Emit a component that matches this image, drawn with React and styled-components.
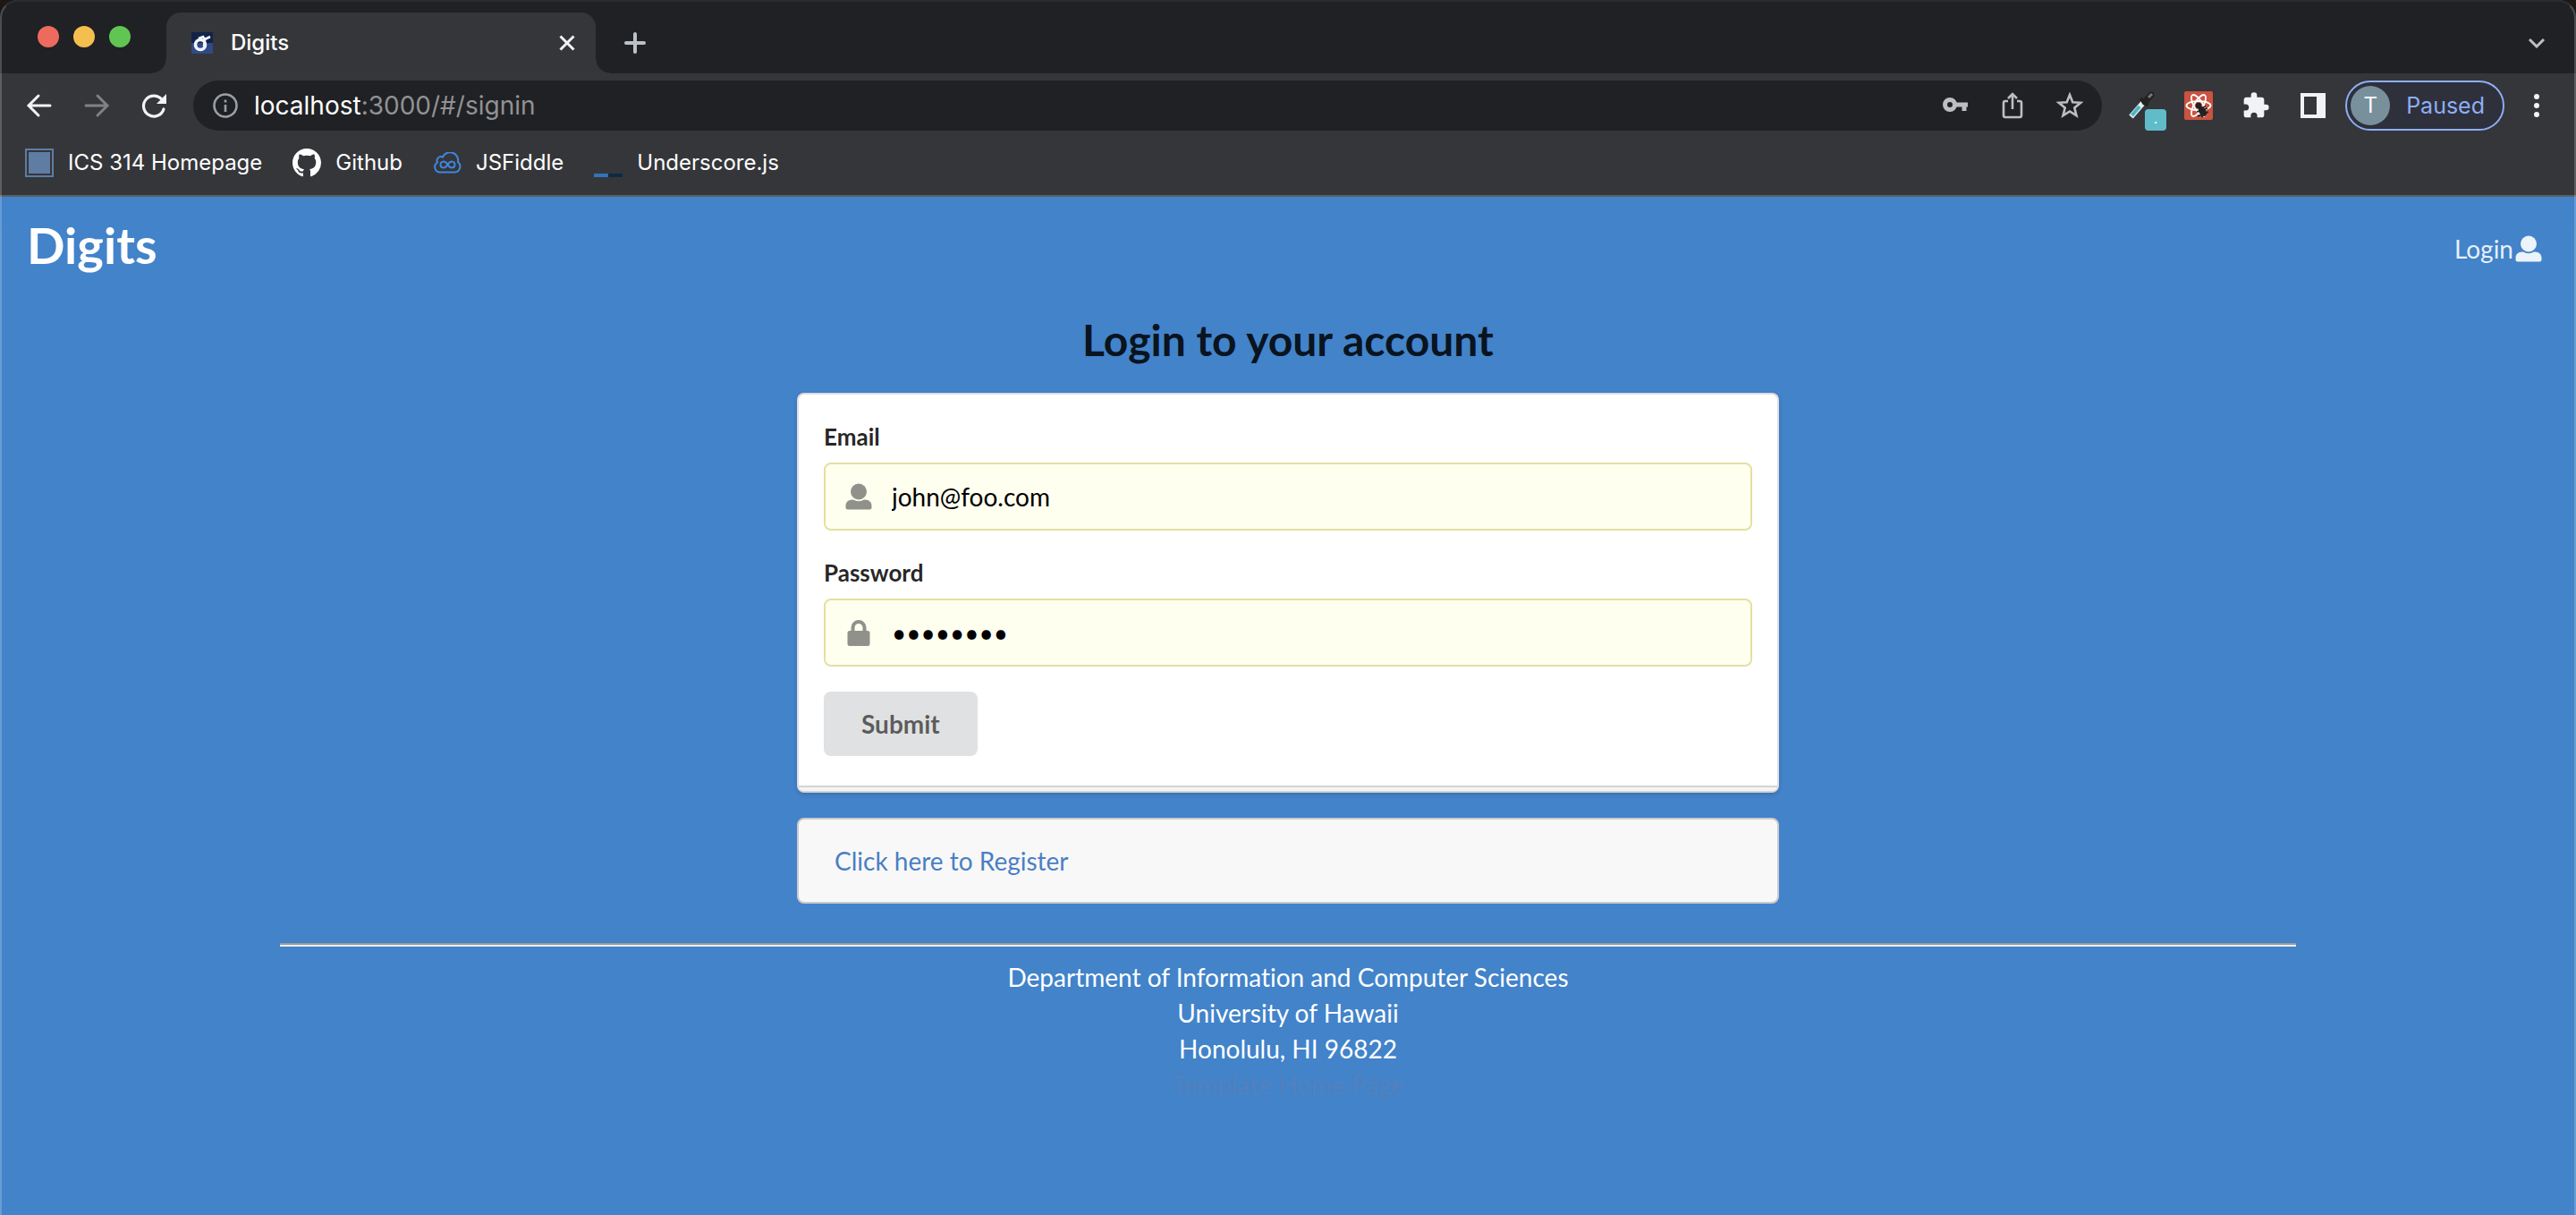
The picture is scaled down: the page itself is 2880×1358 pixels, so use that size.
import React from "react";
import styled, { createGlobalStyle } from "styled-components";

const chromeFont = `Inter, Roboto, "Liberation Sans", sans-serif`;
const pageFont = `Lato, "Liberation Sans", sans-serif`;

const Global = createGlobalStyle`
  *, *::before, *::after { box-sizing: border-box; }
  html { background: #1d1815; }
  body {
    margin: 0;
    font-family: ${pageFont};
    font-size: 28px;
    line-height: 40px;
    font-variant-ligatures: none;
  }
  a { text-decoration: none; }
  svg { display: block; }
`;

const Window = styled.div`
  position: relative;
  min-height: 100vh;
  display: flex;
  flex-direction: column;
  background: #4283ca;
  border-radius: 20px 20px 0 0;
  overflow: hidden;
  &::after {
    content: "";
    position: absolute;
    inset: 0;
    border: 2px solid rgba(255, 255, 255, 0.2);
    border-top-color: rgba(255, 255, 255, 0.05);
    border-bottom: 0;
    border-radius: 20px 20px 0 0;
    pointer-events: none;
  }
`;

const Chrome = styled.header`
  background: #35363a;
  border-bottom: 2px solid #5f6063;
  font-family: ${chromeFont};
  color: #fff;
`;

const TabStrip = styled.div`
  display: flex;
  align-items: flex-end;
  height: 82px;
  background: #202124;
  padding: 0 32px 0 42px;
`;

const Lights = styled.div`
  display: flex;
  gap: 16px;
  width: 144px;
  align-self: center;
`;

const Light = styled.span`
  width: 24px;
  height: 24px;
  border-radius: 50%;
  background: ${(p) => p.$color};
`;

const Tab = styled.div`
  position: relative;
  display: flex;
  align-items: center;
  width: 480px;
  height: 68px;
  padding: 0 20px 0 28px;
  gap: 20px;
  border-radius: 16px 16px 0 0;
  background: #35363a;
  font-size: 24px;
  font-weight: 500;
  &::before, &::after {
    content: "";
    position: absolute;
    bottom: 0;
    width: 16px;
    height: 16px;
  }
  &::before { left: -16px; background: radial-gradient(circle at 0 0, #202124 15px, #35363a 16px); }
  &::after { right: -16px; background: radial-gradient(circle at 100% 0, #202124 15px, #35363a 16px); }
`;

const TabTitle = styled.span`
  flex: 1;
`;

const IconButton = styled.button`
  display: flex;
  align-items: center;
  justify-content: center;
  flex: none;
  width: ${(p) => p.$w || 24}px;
  height: ${(p) => p.$h || 56}px;
  padding: 0;
  border: 0;
  background: none;
  color: ${(p) => p.$color || "#f1f3f4"};
`;

const NewTab = styled(IconButton)`
  margin-left: 32px;
`;

const MenuButton = styled(IconButton)`
  margin-left: 28px;
`;

const Spacer = styled.div`
  flex: 1;
`;

const Toolbar = styled.div`
  display: flex;
  align-items: center;
  height: 72px;
  padding: 0 36px 0 26px;
`;

const NavButtons = styled.div`
  display: flex;
  gap: 28px;
  margin-right: 26px;
`;

const Omnibox = styled.div`
  flex: 1;
  display: flex;
  align-items: center;
  height: 56px;
  padding: 0 20px;
  border-radius: 28px;
  background: #202124;
`;

const Address = styled.div`
  flex: 1;
  margin-left: 16px;
  font-size: 28px;
  color: #919294;
`;

const Host = styled.span`
  color: #fff;
`;

const OmniActions = styled.div`
  display: flex;
  gap: 32px;
`;

const Extensions = styled.div`
  display: flex;
  align-items: center;
  gap: 32px;
  margin: 0 20px 0 28px;
`;

const ExtensionSlot = styled.span`
  position: relative;
  display: flex;
`;

const Badge = styled.span`
  position: absolute;
  right: -12px;
  bottom: -12px;
  width: 24px;
  height: 24px;
  border-radius: 4px;
  background: #60bcc8;
  font-size: 16px;
  line-height: 20px;
  text-align: center;
`;

const Profile = styled.button`
  display: flex;
  align-items: center;
  gap: 18px;
  height: 56px;
  padding: 0 20px 0 4px;
  border: 2px solid #8eaef4;
  border-radius: 28px;
  background: #2e303b;
  color: #8eaef4;
  font: 400 25px ${chromeFont};
`;

const Avatar = styled.span`
  width: 44px;
  height: 44px;
  border-radius: 50%;
  background: #78909c;
  color: #fff;
  font-size: 24px;
  font-weight: 400;
  line-height: 44px;
`;

const Bookmarks = styled.nav`
  display: flex;
  align-items: center;
  gap: 34px;
  height: 64px;
  padding: 0 28px 8px;
`;

const Bookmark = styled.a`
  display: flex;
  align-items: center;
  gap: 16px;
  color: #fff;
  font-size: 24px;
  line-height: 32px;
`;

const Square = styled.span`
  width: 32px;
  height: 32px;
  padding: 2px;
  border: 2px solid #5f7ca3;
  &::before { content: ""; display: block; height: 100%; background: #5f7ca3; }
`;

const NavBar = styled.nav`
  display: flex;
  align-items: center;
  justify-content: space-between;
  height: 108px;
  padding: 0 38px 0 30px;
`;

const Brand = styled.a`
  color: #fff;
  font-size: 56px;
  font-weight: 700;
  line-height: 72px;
`;

const LoginLink = styled.a`
  display: flex;
  align-items: center;
  gap: 2px;
  padding-top: 8px;
  color: rgba(255, 255, 255, 0.9);
`;

const Main = styled.main`
  width: 1098px;
  max-width: 100%;
  margin: 0 auto;
`;

const Title = styled.h2`
  margin: 22px 0 29px;
  text-align: center;
  font-size: 48px;
  line-height: 60px;
  color: rgba(0, 0, 0, 0.87);
`;

const Form = styled.form`
  border: 2px solid #dcdddf;
  border-bottom-color: #d4d4d5;
  border-radius: 8px;
  background: #fff;
  box-shadow: 0 2px 4px rgba(34, 36, 38, 0.2);
  overflow: hidden;
`;

const Fields = styled.div`
  display: flex;
  flex-direction: column;
  align-items: flex-start;
  gap: 28px;
  padding: 28px 28px 33px;
`;

const FormFoot = styled.div`
  height: 6px;
  border-top: 2px solid #d4d4d5;
  background: #f3f4f5;
`;

const Field = styled.div`
  display: flex;
  flex-direction: column;
  gap: 10px;
  width: 100%;
`;

const Label = styled.label`
  font-size: 26px;
  font-weight: 700;
  line-height: 38px;
  color: rgba(0, 0, 0, 0.87);
`;

const InputWrap = styled.div`
  display: flex;
  align-items: center;
  height: 76px;
  padding-left: 22px;
  gap: 16px;
  border: 2px solid #e5dfa1;
  border-radius: 8px;
  background: #fffff0;
  color: #90918a;
`;

const Input = styled.input`
  flex: 1;
  min-width: 0;
  height: 100%;
  padding: 0 28px 0 6px;
  border: 0;
  outline: 0;
  background: none;
  color: #000;
  font-family: ${pageFont};
  font-size: 28px;
`;

const Submit = styled.button`
  height: 72px;
  padding: 0 42px;
  border: 0;
  border-radius: 8px;
  background: #e0e1e2;
  color: rgba(0, 0, 0, 0.6);
  font: 700 28px ${pageFont};
`;

const Message = styled.div`
  margin: 28px 0 44px;
  padding: 26px 40px;
  border: 2px solid #c9cacb;
  border-radius: 8px;
  background: #f8f8f9;
`;

const Register = styled.a`
  color: #4a7fc3;
`;

const Footer = styled.footer`
  width: 2254px;
  max-width: 100%;
  margin: 0 auto;
  border-top: 2px solid #9a9a9a;
  text-align: center;
  color: #fff;
  &::before {
    content: "";
    display: block;
    height: 2px;
    margin-bottom: 14px;
    background: #eeeeee;
  }
`;

const FooterLink = styled.a`
  color: #5381bd;
`;

const Svg = ({ w = 28, h = w, box = "0 0 24 24", children, ...rest }) => (
  <svg width={w} height={h} viewBox={box} fill="none" stroke="currentColor" aria-hidden="true" {...rest}>
    {children}
  </svg>
);

const UserIcon = () => (
  <Svg w={30} box="0 0 30 30" stroke="none" fill="currentColor">
    <circle cx="15" cy="9.500" r="9" />
    <path d="M8 18.500h1a12 12 0 0 0 12 0h1c5 0 7.500 3 7.500 7v1.500a2.500 2.500 0 0 1-2.500 2.500h-24A2.500 2.500 0 0 1 .5 27v-1.500c0-4 2.500-7 7.500-7z" />
  </Svg>
);

const LockIcon = () => (
  <Svg w={30} box="0 0 30 30" stroke="none" fill="currentColor">
    <path fillRule="evenodd" d="M6.500 13V9.500a8.500 8.500 0 0 1 17 0V13h1.500a2.500 2.500 0 0 1 2.500 2.500V27.500a2.500 2.500 0 0 1-2.500 2.500h-20A2.500 2.500 0 0 1 2.500 27.500v-12A2.500 2.500 0 0 1 5 13zM10.500 13h9V9.500a4.500 4.500 0 0 0-9 0z" />
  </Svg>
);

const GithubIcon = () => (
  <Svg w={32} box="0 0 16 16" stroke="none" fill="#fff">
    <path d="M8 0C3.580 0 0 3.580 0 8c0 3.540 2.290 6.530 5.470 7.590.4.070.55-.17.55-.38 0-.19-.01-.82-.01-1.490-2.010.37-2.530-.49-2.690-.94-.09-.23-.48-.94-.82-1.130-.28-.15-.68-.52-.01-.53.63-.01 1.080.58 1.230.82.72 1.210 1.870.87 2.330.66.07-.52.28-.87.51-1.070-1.780-.2-3.640-.89-3.640-3.950 0-.87.31-1.590.82-2.150-.08-.2-.36-1.020.08-2.120 0 0 .67-.21 2.200.82a7.600 7.600 0 0 1 4 0c1.530-1.040 2.200-.82 2.200-.82.44 1.100.16 1.920.08 2.120.51.56.82 1.270.82 2.150 0 3.070-1.870 3.750-3.650 3.950.29.25.54.73.54 1.480 0 1.070-.01 1.930-.01 2.200 0 .21.15.46.55.38A8 8 0 0 0 16 8c0-4.420-3.580-8-8-8z" />
  </Svg>
);

export default function App() {
  return (
    <Window>
      <Global />
      <Chrome>
        <TabStrip>
          <Lights>
            <Light $color="#ed6a5e" />
            <Light $color="#f5bf4f" />
            <Light $color="#61c554" />
          </Lights>
          <Tab>
            <Svg w={24} stroke="none">
              <rect width="24" height="24" fill="#13224b" />
              <rect y="12" width="24" height="12" fill="#2f4a85" />
              <circle cx="10" cy="14" r="5.500" stroke="#f2f4f8" strokeWidth="3.600" />
              <path d="M8 7l5-2 2 3 6-3M15 8l-1 8" stroke="#f2f4f8" strokeWidth="2.600" />
            </Svg>
            <TabTitle>Digits</TabTitle>
            <IconButton $w={24} aria-label="Close tab">
              <Svg w={24} strokeWidth="3"><path d="M4.500 4.500l15 15M19.500 4.500l-15 15" /></Svg>
            </IconButton>
          </Tab>
          <NewTab $w={24} $h={68} $color="#bdc1c6" aria-label="New tab">
            <Svg w={24} strokeWidth="4" strokeLinecap="round"><path d="M12 2v20M2 12h20" /></Svg>
          </NewTab>
          <Spacer />
          <IconButton $w={24} $h={68} $color="#bdc1c6" aria-label="Search tabs">
            <Svg w={24} strokeWidth="3"><path d="M4 8l8 8 8-8" /></Svg>
          </IconButton>
        </TabStrip>
        <Toolbar>
          <NavButtons>
            <IconButton $w={36} aria-label="Back">
              <Svg w={32} box="0 0 32 32" strokeWidth="3" strokeLinecap="round"><path d="M28 16H5M15 5L4 16l11 11" /></Svg>
            </IconButton>
            <IconButton $w={36} $color="#808184" aria-label="Forward">
              <Svg w={32} box="0 0 32 32" strokeWidth="3" strokeLinecap="round"><path d="M4 16h23M17 5l11 11-11 11" /></Svg>
            </IconButton>
            <IconButton $w={36} aria-label="Reload">
              <Svg w={32} box="0 0 32 32" strokeWidth="3.200">
                <path d="M27 20a11.500 11.500 0 1 1-1.500-10" strokeLinecap="round" />
                <path d="M30 3v11H19z" fill="currentColor" stroke="none" />
              </Svg>
            </IconButton>
          </NavButtons>
          <Omnibox>
            <IconButton $w={32} $color="#9aa0a6" aria-label="Site information">
              <Svg w={28} box="0 0 28 28" strokeWidth="2.600"><circle cx="14" cy="14" r="12.500" /><path d="M14 13v8M14 7.500v3" /></Svg>
            </IconButton>
            <Address><Host>localhost</Host>:3000/#/signin</Address>
            <OmniActions>
              <IconButton $w={32} $color="#bdbec0" aria-label="Passwords">
                <Svg w={28} box="0 0 28 28">
                  <circle cx="8" cy="13" r="5.500" strokeWidth="5" />
                  <path d="M14 13h14M24 13v7" strokeWidth="5" />
                </Svg>
              </IconButton>
              <IconButton $w={32} $color="#bdbec0" aria-label="Share">
                <Svg w={30} box="0 0 30 30" strokeWidth="2.600">
                  <path d="M10 10H7a2 2 0 0 0-2 2v14a2 2 0 0 0 2 2h16a2 2 0 0 0 2-2V12a2 2 0 0 0-2-2h-3M15 19V3M10 7l5-5 5 5" />
                </Svg>
              </IconButton>
              <IconButton $w={32} $color="#bdbec0" aria-label="Bookmark this page">
                <Svg w={32} box="0 0 32 32" strokeWidth="2.600">
                  <path d="M16 4l3.300 8.200 8.900.6-6.900 5.700 2.200 8.600L16 22.500l-7.500 4.600 2.200-8.600-6.900-5.700 8.900-.6z" />
                </Svg>
              </IconButton>
            </OmniActions>
          </Omnibox>
          <Extensions>
            <ExtensionSlot>
              <IconButton $w={32} $h={32} aria-label="Color picker">
                <Svg w={32} box="0 0 32 32">
                  <path d="M4.500 28.500L18 13" stroke="#dfeeee" strokeWidth="6" />
                  <path d="M5.500 27L14 17" stroke="#4db6c2" strokeWidth="4" />
                  <path d="M15 8l8 8" stroke="#222" strokeWidth="4" />
                  <path d="M20 12l7-8" stroke="#222" strokeWidth="7" strokeLinecap="round" />
                  <path d="M24 7l4-4" stroke="#777" strokeWidth="3" />
                </Svg>
              </IconButton>
              <Badge>.</Badge>
            </ExtensionSlot>
            <IconButton $w={32} aria-label="React developer tools">
              <Svg w={32} box="0 0 32 32">
                <rect width="32" height="32" rx="2" fill="#cb5340" stroke="none" />
                <g stroke="#fff" strokeWidth="1.800">
                  <ellipse cx="16" cy="16" rx="13.500" ry="5" />
                  <ellipse cx="16" cy="16" rx="13.500" ry="5" transform="rotate(60 16 16)" />
                  <ellipse cx="16" cy="16" rx="13.500" ry="5" transform="rotate(120 16 16)" />
                </g>
                <circle cx="16" cy="16" r="3.200" fill="#222" stroke="none" />
                <ellipse cx="20.500" cy="22.500" rx="4" ry="6" transform="rotate(-35 20.500 22.500)" fill="#222" stroke="none" />
                <path d="M14 23l12-4M15 28l12-5M21 29l-2-2M18 19l6-2" stroke="#222" strokeWidth="1.800" />
              </Svg>
            </IconButton>
            <IconButton $w={32} aria-label="Extensions">
              <Svg w={32} stroke="none" fill="currentColor">
                <path d="M20.500 11H19V7c0-1.100-.9-2-2-2h-4V3.500a2.500 2.500 0 0 0-5 0V5H4c-1.100 0-2 .9-2 2v3.800h1.500a2.700 2.700 0 0 1 0 5.400H2V20c0 1.100.9 2 2 2h3.800v-1.500a2.700 2.700 0 0 1 5.400 0V22H17c1.100 0 2-.9 2-2v-4h1.500a2.500 2.500 0 0 0 0-5z" />
              </Svg>
            </IconButton>
            <IconButton $w={32} aria-label="Side panel">
              <Svg w={28} box="0 0 28 28" stroke="none"><path fill="currentColor" fillRule="evenodd" d="M0 0h28v28H0zM4 4v20h14V4z" /></Svg>
            </IconButton>
          </Extensions>
          <Profile><Avatar>T</Avatar>Paused</Profile>
          <MenuButton $w={16} aria-label="Menu">
            <Svg w={8} h={28} box="0 0 8 28" stroke="none" fill="currentColor">
              <circle cx="4" cy="4" r="3" /><circle cx="4" cy="14" r="3" /><circle cx="4" cy="24" r="3" />
            </Svg>
          </MenuButton>
        </Toolbar>
        <Bookmarks>
          <Bookmark href="#ics"><Square />ICS 314 Homepage</Bookmark>
          <Bookmark href="#github"><GithubIcon />Github</Bookmark>
          <Bookmark href="#jsfiddle">
            <Svg w={32} h={24} box="0 0 32 24" stroke="#3f87e0" strokeWidth="2">
              <path d="M7 22.500h17.500a6.500 6.500 0 0 0 3.500-11.500 9 9 0 0 0-17-5.500 4.500 4.500 0 0 0-6 6A6 6 0 0 0 7 22.500z" />
              <path d="M16.500 14c-3-5-8-4-8 0s5 5 8 0 8-4 8 0-5 5-8 0z" />
            </Svg>
            JSFiddle
          </Bookmark>
          <Bookmark href="#underscore">
            <Svg w={32} box="0 0 32 32" stroke="none"><path fill="#2f75b8" d="M0 28h16v4H0z" /><path fill="#0d2a42" d="M16 28h16v4H16z" /></Svg>
            Underscore.js
          </Bookmark>
        </Bookmarks>
      </Chrome>
      <NavBar>
        <Brand href="#/">Digits</Brand>
        <LoginLink href="#/signin">Login<UserIcon /></LoginLink>
      </NavBar>
      <Main>
        <Title>Login to your account</Title>
        <Form>
          <Fields>
            <Field>
              <Label htmlFor="email">Email</Label>
              <InputWrap><UserIcon /><Input id="email" type="email" defaultValue="john@foo.com" /></InputWrap>
            </Field>
            <Field>
              <Label htmlFor="password">Password</Label>
              <InputWrap><LockIcon /><Input id="password" type="password" defaultValue="changeme" /></InputWrap>
            </Field>
            <Submit type="button">Submit</Submit>
          </Fields>
          <FormFoot />
        </Form>
        <Message><Register href="#/signup">Click here to Register</Register></Message>
      </Main>
      <Footer>
        Department of Information and Computer Sciences<br />
        University of Hawaii<br />
        Honolulu, HI 96822<br />
        <FooterLink href="#template">Template Home Page</FooterLink>
      </Footer>
    </Window>
  );
}
